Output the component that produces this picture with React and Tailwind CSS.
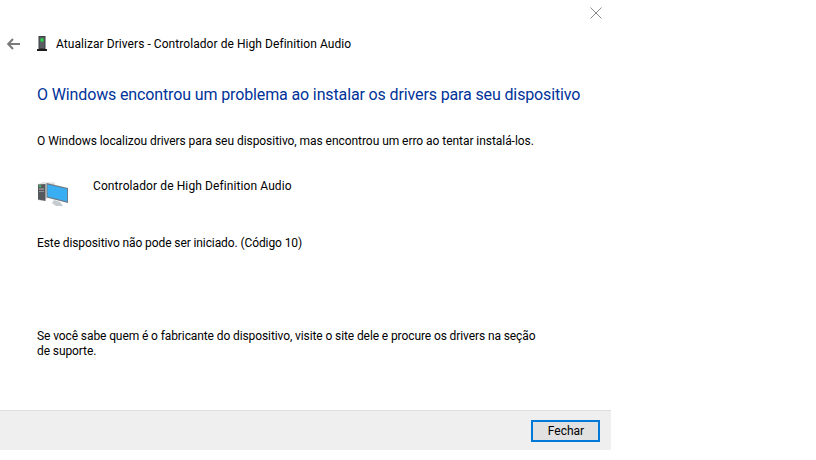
const FONT = "font-['Roboto',sans-serif]";

function DeviceIcon() {
  return (
    <svg width="10" height="15" viewBox="0 0 10 15">
      <rect x="1.5" y="0" width="7" height="13" fill="#3c3f42" />
      <rect x="2.5" y="1" width="5" height="11" fill="#5a5e62" />
      <rect x="3.5" y="2.5" width="3" height="3" fill="#22e04a" />
      <rect x="0" y="13" width="10" height="2" fill="#1c1c1c" />
    </svg>
  );
}

function ComputerIcon() {
  return (
    <svg width="32" height="26" viewBox="0 0 32 26">
      <path d="M1 3 L6 1 L18 1.5 L18 4 L10 4 L10 18 L4 20 L1 19 Z" fill="#e2e2e2" />
      <path d="M1 3.5 L8.5 3 L8.5 20 L1 18.5 Z" fill="#55585c" />
      <rect x="2" y="4.5" width="2" height="1.5" fill="#3fd45c" />
      <rect x="2" y="7.5" width="5" height="1" fill="#b0b0b0" />
      <rect x="2" y="10" width="5" height="1" fill="#909090" />
      <path d="M9.5 2 L31 7 L31 22 L9.5 16.5 Z" fill="#6f7b84" />
      <path d="M10.5 3.5 L30 8 L30 20.5 L10.5 15.5 Z" fill="#39aef2" />
      <path d="M17 19 L23 21 L26 25 L19 25 L15 22 Z" fill="#c4cace" />
    </svg>
  );
}

export default function App() {
  return (
    <div className={`w-[816px] h-[460px] bg-white text-[12px] text-black overflow-hidden ${FONT}`}>
      <div className="w-[611px] h-[450px] flex flex-col">
        <div className="h-[27px] flex justify-end items-end pr-[9px]">
          <svg width="12" height="12" viewBox="0 0 12 12" className="mb-[8px]">
            <path d="M.5.5l11 11M11.5.5l-11 11" stroke="#8a8a8a" strokeWidth="1" fill="none" />
          </svg>
        </div>
        <div className="h-[34px] flex items-center pl-[7px] pb-[1px]">
          <svg width="13" height="12" viewBox="0 0 13 12">
            <path d="M6 1L1.2 6 6 11M1.5 6H13" stroke="#7a7a7a" strokeWidth="2" fill="none" />
          </svg>
          <div className="ml-[17px] mr-[9px] flex"><DeviceIcon /></div>
          <span className="leading-[16px] tracking-[0.06px]">Atualizar Drivers - Controlador de High Definition Audio</span>
        </div>
        <div className="flex-1 pl-[37px] flex flex-col">
          <h1 className="mt-[23px] text-[16px] leading-[21px] text-[#003399] font-normal tracking-[-0.13px]">
            O Windows encontrou um problema ao instalar os drivers para seu dispositivo
          </h1>
          <p className="mt-[28px] leading-[16px] tracking-[-0.05px]">
            O Windows localizou drivers para seu dispositivo, mas encontrou um erro ao tentar instalá-los.
          </p>
          <div className="mt-[29px] flex items-start">
            <div className="mt-[3px] flex"><ComputerIcon /></div>
            <span className="ml-[24px] leading-[16px] tracking-[0.1px]">Controlador de High Definition Audio</span>
          </div>
          <p className="mt-[28px] leading-[16px] tracking-[-0.1px]">Este dispositivo não pode ser iniciado. (Código 10)</p>
          <p className="mt-[78px] w-[510px] leading-[15px] tracking-[-0.1px]">
            Se você sabe quem é o fabricante do dispositivo, visite o site dele e procure os drivers na seção de suporte.
          </p>
        </div>
        <div className="h-[40px] bg-[#efefef] border-t border-[#dfdfdf] flex items-start justify-end pr-[11px] pt-[9px]">
          <button className="w-[69px] h-[22px] pl-[1px] bg-[#e1e1e1] border-2 border-[#0078d7] text-[12px] leading-[16px] flex items-center justify-center">
            Fechar
          </button>
        </div>
      </div>
    </div>
  );
}
